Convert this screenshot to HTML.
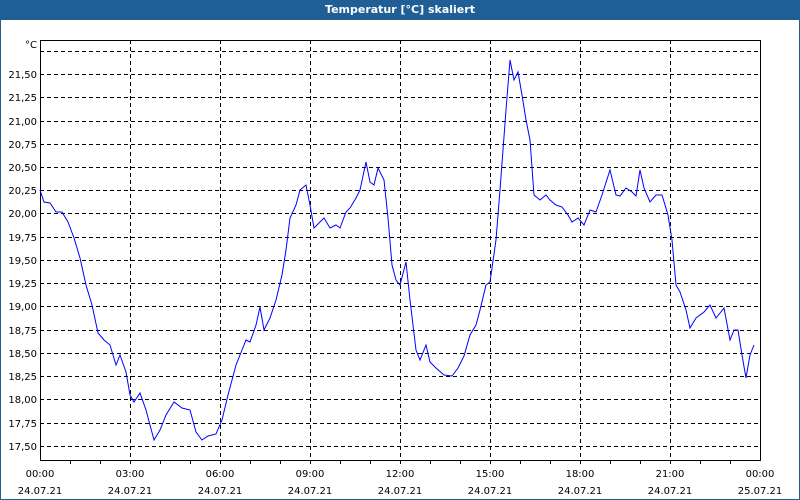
<!DOCTYPE html>
<html><head><meta charset="utf-8"><style>
html,body{margin:0;padding:0;width:800px;height:500px;overflow:hidden;background:#fff}
#t{position:absolute;left:0;top:0;width:800px;height:20px;background:#1f5f96;color:#fff;font:bold 11px "DejaVu Sans","Liberation Sans",sans-serif;text-align:center;line-height:19px}
#f{position:absolute;left:0;top:20px;width:798px;height:479px;border:1px solid #1f5f96;border-top:none}
svg{position:absolute;left:0;top:0}
text{font-family:"DejaVu Sans","Liberation Sans",sans-serif;font-size:10px;fill:#000}
</style></head><body>
<div id="f"></div>
<div id="t">Temperatur [°C] skaliert</div>
<svg width="800" height="500">
<g stroke="#000" stroke-width="1" stroke-dasharray="4,3" fill="none" shape-rendering="crispEdges">
<path d="M40 51.5H760M40 74.5H760M40 97.5H760M40 121.5H760M40 144.5H760M40 167.5H760M40 190.5H760M40 213.5H760M40 237.5H760M40 260.5H760M40 283.5H760M40 306.5H760M40 330.5H760M40 353.5H760M40 376.5H760M40 399.5H760M40 423.5H760M40 446.5H760"/>
<path d="M130.5 40V460M220.5 40V460M310.5 40V460M400.5 40V460M490.5 40V460M580.5 40V460M670.5 40V460"/>
</g>
<g stroke="#000" fill="none" shape-rendering="crispEdges">
<path d="M40.5 40V460.5H760.5V40M40 40.5H760"/>
<path d="M70.5 460v4M100.5 460v4M130.5 460v4M160.5 460v4M190.5 460v4M220.5 460v4M250.5 460v4M280.5 460v4M310.5 460v4M340.5 460v4M370.5 460v4M400.5 460v4M430.5 460v4M460.5 460v4M490.5 460v4M520.5 460v4M550.5 460v4M580.5 460v4M610.5 460v4M640.5 460v4M670.5 460v4M700.5 460v4M730.5 460v4"/>
</g>
<polyline fill="none" stroke="#0000ff" stroke-width="1" points="40,190 44,202 50,203 56,212 62,212 68,222 74,238 80,258 86,285 92,305 98,333 104,340 110,345 116,365 120,355 126,372 130,395 134,402 140,393 146,410 154,440 160,430 166,415 174,402 182,408 190,410 196,432 202,440 208,436 216,434 222,420 228,395 236,365 242,350 246,340 250,342 256,325 260,307 264,330 270,318 276,300 282,275 286,250 290,218 296,205 300,190 306,185 310,205 314,228 320,222 324,218 330,228 336,225 340,228 346,212 350,208 356,198 360,190 366,162 370,182 374,185 378,168 384,180 388,218 392,265 396,280 400,285 406,262 410,300 416,350 420,360 426,345 430,362 436,368 444,375 452,376 458,368 464,356 470,335 476,325 480,310 486,285 490,282 496,240 500,190 506,110 510,60 514,80 518,72 522,95 526,120 530,140 534,195 540,200 546,195 550,200 556,205 562,207 568,215 572,222 578,218 584,225 590,210 596,212 602,195 610,170 616,195 620,196 626,188 632,192 636,196 640,170 644,188 650,202 656,195 662,195 668,215 672,240 676,285 680,292 686,310 690,328 696,318 704,312 710,305 716,318 724,308 730,340 734,330 738,330 742,355 746,378 750,355 754,345"/>
<g text-anchor="end">
<text x="37" y="48">°C</text>
<text x="37" y="78">21,50</text><text x="37" y="101">21,25</text><text x="37" y="125">21,00</text><text x="37" y="148">20,75</text><text x="37" y="171">20,50</text><text x="37" y="194">20,25</text><text x="37" y="217">20,00</text><text x="37" y="241">19,75</text><text x="37" y="264">19,50</text><text x="37" y="287">19,25</text><text x="37" y="310">19,00</text><text x="37" y="334">18,75</text><text x="37" y="357">18,50</text><text x="37" y="380">18,25</text><text x="37" y="403">18,00</text><text x="37" y="427">17,75</text><text x="37" y="450">17,50</text>
</g>
<g text-anchor="middle">
<text x="40" y="477">00:00</text><text x="130" y="477">03:00</text><text x="220" y="477">06:00</text><text x="310" y="477">09:00</text><text x="400" y="477">12:00</text><text x="490" y="477">15:00</text><text x="580" y="477">18:00</text><text x="670" y="477">21:00</text><text x="760" y="477">00:00</text>
<text x="40" y="494">24.07.21</text><text x="130" y="494">24.07.21</text><text x="220" y="494">24.07.21</text><text x="310" y="494">24.07.21</text><text x="400" y="494">24.07.21</text><text x="490" y="494">24.07.21</text><text x="580" y="494">24.07.21</text><text x="670" y="494">24.07.21</text><text x="760" y="494">25.07.21</text>
</g>
</svg>
</body></html>
